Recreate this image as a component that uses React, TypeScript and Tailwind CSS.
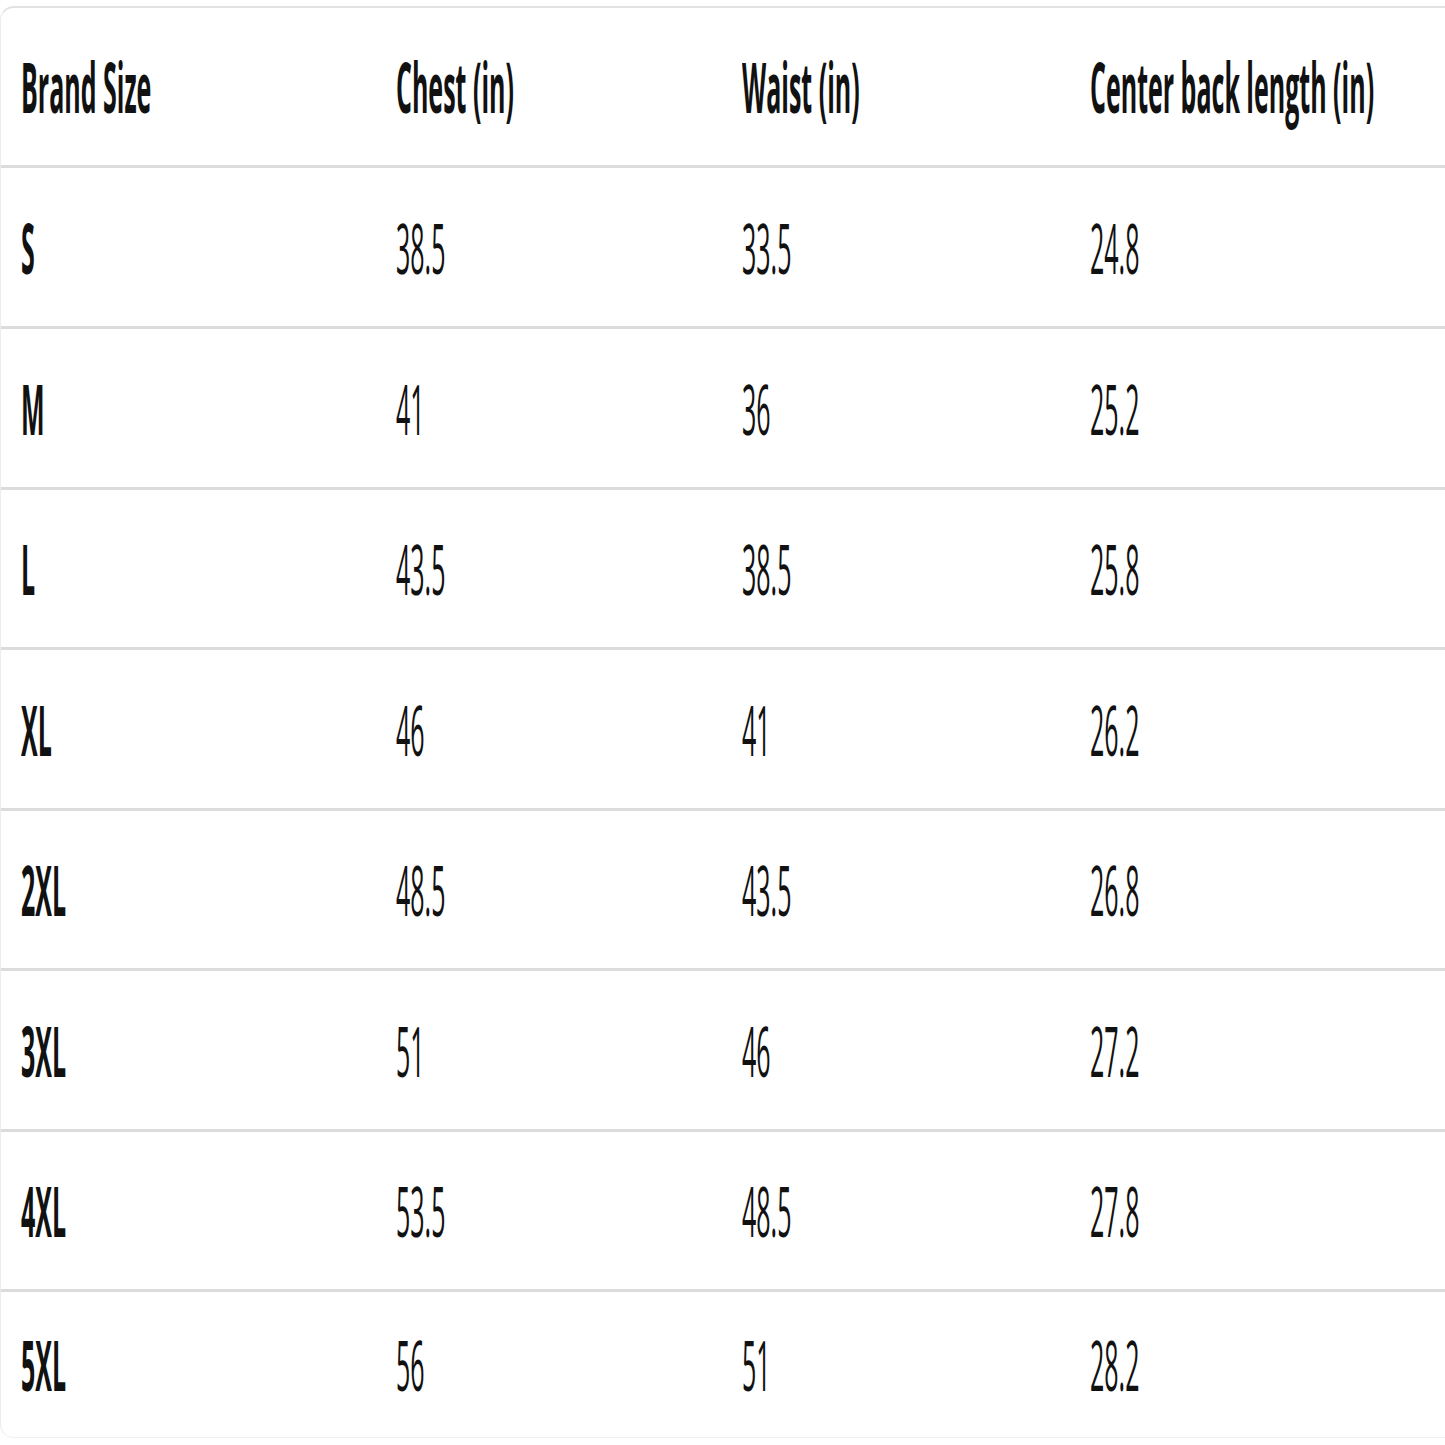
import React from "react";

const rows = [
  { size: "S", chest: "38.5", waist: "33.5", len: "24.8", h: "h-[161px]" },
  { size: "M", chest: "41", waist: "36", len: "25.2", h: "h-[161px]" },
  { size: "L", chest: "43.5", waist: "38.5", len: "25.8", h: "h-[160px]" },
  { size: "XL", chest: "46", waist: "41", len: "26.2", h: "h-[161px]" },
  { size: "2XL", chest: "48.5", waist: "43.5", len: "26.8", h: "h-[160px]" },
  { size: "3XL", chest: "51", waist: "46", len: "27.2", h: "h-[161px]" },
  { size: "4XL", chest: "53.5", waist: "48.5", len: "27.8", h: "h-[160px]" },
  { size: "5XL", chest: "56", waist: "51", len: "28.2", h: "h-[145px]" },
];

function Cell({ children, bold }: { children: React.ReactNode; bold?: boolean }) {
  return (
    <div className="flex items-center pl-[20px]">
      <span
        className={
          "inline-block origin-center scale-y-[2.8] text-[25px] leading-none text-[#111] whitespace-nowrap " +
          (bold ? "font-bold" : "font-normal")
        }
        style={{ fontFamily: '"Open Sans", "Noto Sans", sans-serif' }}
      >
        {children}
      </span>
    </div>
  );
}

export default function App() {
  return (
    <div className="w-[1445px] h-[1445px] bg-white overflow-hidden pt-[6px]">
      <div className="w-[1460px] rounded-tl-[14px] rounded-bl-[14px] border-t-2 border-l border-b border-t-[#e2e2e2] border-l-[#ececec] border-b-[#f0f0f0]">
        <div className="grid grid-cols-[375px_346px_348px_1fr] h-[160px] border-b-[3px] border-[#dcdcdc]">
          <Cell bold>Brand Size</Cell>
          <Cell bold>Chest (in)</Cell>
          <Cell bold>Waist (in)</Cell>
          <Cell bold>Center back length (in)</Cell>
        </div>
        {rows.map((r, i) => (
          <div
            key={r.size}
            className={
              "grid grid-cols-[375px_346px_348px_1fr] " +
              r.h +
              (i < rows.length - 1 ? " border-b-[3px] border-[#dcdcdc]" : "")
            }
          >
            <Cell bold>{r.size}</Cell>
            <Cell>{r.chest}</Cell>
            <Cell>{r.waist}</Cell>
            <Cell>{r.len}</Cell>
          </div>
        ))}
      </div>
    </div>
  );
}
